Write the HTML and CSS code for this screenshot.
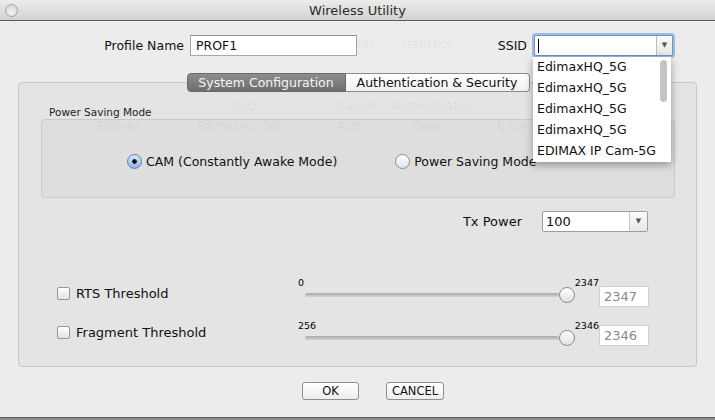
FILE: index.html
```html
<!DOCTYPE html>
<html lang="en">
<head>
    <meta charset="UTF-8">
    <meta name="viewport" content="width=device-width, initial-scale=1.0">
    <title>Wireless Utility</title>
    <link rel="stylesheet" href="styles.css">
</head>
<body>
    <div class="window">
        <div class="titlebar">
            <span class="close-btn"></span>
            <span class="title">Wireless Utility</span>
            <span></span>
        </div>

        <div class="profile-row">
            <label class="profile-label" for="profile">Profile Name</label>
            <input class="text-input profile-input" id="profile" type="text" value="PROF1">
            <label class="ssid-label" for="ssid">SSID</label>
            <div class="combo">
                <input class="combo-input" id="ssid" type="text" value="">
                <span class="combo-caret"></span>
                <span class="combo-arrow">&#9660;</span>
                <ul class="ssid-list">
                    <li>EdimaxHQ_5G</li>
                    <li>EdimaxHQ_5G</li>
                    <li>EdimaxHQ_5G</li>
                    <li>EdimaxHQ_5G</li>
                    <li>EDIMAX IP Cam-5G</li>
                    <span class="scroll-thumb"></span>
                </ul>
            </div>
        </div>

        <div class="panel">
            <div class="tabs">
                <button class="tab tab-active">System Configuration</button>
                <button class="tab tab-auth">Authentication &amp; Security</button>
            </div>

            <div class="group-title">Power Saving Mode</div>
            <div class="group-box">
                <label class="radio-item radio-cam">
                    <span class="radio radio-on"></span>CAM (Constantly Awake Mode)
                </label>
                <label class="radio-item radio-psm">
                    <span class="radio"></span>Power Saving Mode
                </label>
            </div>

            <div class="tx-row">
                <span class="tx-label">Tx Power</span>
                <div class="select">
                    <span class="select-value">100</span>
                    <span class="select-arrow">&#9660;</span>
                </div>
            </div>

            <div class="thresholds">
                <div class="threshold-row">
                    <label class="check-item"><span class="checkbox"></span>RTS Threshold</label>
                    <div class="slider">
                        <div class="slider-labels"><span>0</span><span>2347</span></div>
                        <div class="slider-track"><span class="slider-knob"></span></div>
                    </div>
                    <input class="num-input" type="text" value="2347">
                </div>
                <div class="threshold-row row-fragment">
                    <label class="check-item"><span class="checkbox"></span>Fragment Threshold</label>
                    <div class="slider">
                        <div class="slider-labels"><span>256</span><span>2346</span></div>
                        <div class="slider-track"><span class="slider-knob"></span></div>
                    </div>
                    <input class="num-input" type="text" value="2346">
                </div>
            </div>
        </div>

        <div class="buttons">
            <button class="push-btn btn-ok">OK</button>
            <button class="push-btn btn-cancel">CANCEL</button>
        </div>
    </div>

    <!-- the window behind shows faintly through this one -->
    <div class="ghost">
        <span style="left:355px;top:37px">Key</span>
        <span style="left:400px;top:37px">Statistics</span>
        <span style="left:230px;top:99px">SSID</span>
        <span style="left:330px;top:99px">Channel</span>
        <span style="left:391px;top:99px">Authentication</span>
        <span style="left:97px;top:119px">Edimax</span>
        <span style="left:197px;top:119px">EdimaxHQ_5G</span>
        <span style="left:337px;top:119px">Auto</span>
        <span style="left:413px;top:119px">Open</span>
        <span style="left:497px;top:119px">None</span>
    </div>
</body>
</html>
```

FILE: styles.css
```css
* {
    box-sizing: border-box;
}
body {
    position: relative;
    margin: 0;
    width: 715px;
    height: 420px;
    overflow: hidden;
    background-color: #8c8c8c;
    font-family: "DejaVu Sans", sans-serif;
    font-size: 12.5px;
    color: #111;
}
.window {
    height: 418px;
    background-color: #ececec;
    border-bottom: 1px solid #5e5e5e;
}

/* title bar */
.titlebar {
    height: 21px;
    display: grid;
    grid-template-columns: 1fr auto 1fr;
    align-items: center;
    background: linear-gradient(#ececec, #d2d2d2);
    border-bottom: 1px solid #5c5c5c;
}
.close-btn {
    width: 13px;
    height: 13px;
    margin-left: 5px;
    border-radius: 50%;
    border: 1px solid #a3a3a3;
    background: radial-gradient(circle at 50% 70%, #f4f4f4, #cfcfcf);
}
.title {
    font-size: 13px;
    color: #2c2c2c;
}

/* profile row */
.profile-row {
    display: flex;
    align-items: center;
    height: 21px;
    margin-top: 14px;
}
.profile-label {
    width: 184px;
    text-align: right;
}
.text-input {
    height: 21px;
    border: 1px solid #a8a8a8;
    border-top-color: #8f8f8f;
    background-color: #fff;
    font-family: inherit;
    font-size: 12.5px;
    padding: 0 5px;
    color: #111;
    outline: none;
}
.profile-input {
    width: 167px;
    margin-left: 6px;
}
.ssid-label {
    width: 170px;
    text-align: right;
}
.combo {
    position: relative;
    width: 139px;
    height: 21px;
    margin-left: 7px;
    display: flex;
    border: 1px solid #6f94c9;
    border-radius: 2px;
    box-shadow: 0 0 0 2px #9bbbe6;
    background-color: #fff;
}
.combo-input {
    flex: 1;
    min-width: 0;
    border: none;
    outline: none;
    background: transparent;
    padding: 0 0 0 4px;
}
.combo-caret {
    position: absolute;
    left: 3px;
    top: 3px;
    width: 1px;
    height: 14px;
    background-color: #000;
}
.combo-arrow {
    width: 16px;
    border-left: 1px solid #bcbcbc;
    background: linear-gradient(#fbfbfb, #e6e6e6);
    font-size: 7px;
    color: #555;
    text-align: center;
    line-height: 19px;
}
.ssid-list {
    position: absolute;
    top: 21px;
    left: -2px;
    width: 138px;
    height: 105px;
    margin: 0;
    padding: 0 13px 0 4px;
    list-style: none;
    background-color: #fff;
    box-shadow: 0 3px 8px rgba(0, 0, 0, 0.35);
    overflow: hidden;
    z-index: 3;
}
.ssid-list li {
    height: 21px;
    line-height: 20px;
    font-size: 12.5px;
    white-space: nowrap;
    overflow: hidden;
    color: #111;
}
.scroll-thumb {
    position: absolute;
    top: 3px;
    right: 4px;
    width: 7px;
    height: 42px;
    border-radius: 4px;
    background-color: #c4c4c4;
}

/* tab panel */
.panel {
    height: 285px;
    margin: 26px 18px 0;
    padding: 0 21px 0 22px;
    border: 1px solid #c6c6c6;
    border-radius: 4px;
    background-color: #e4e4e4;
}
.tabs {
    position: relative;
    z-index: 2;
    display: flex;
    justify-content: center;
    margin-top: -10px;
}
.tab {
    height: 19px;
    padding: 0;
    border: 1px solid #8a8a8a;
    font-family: inherit;
    font-size: 12.5px;
    line-height: 17px;
    color: #111;
    background: linear-gradient(#ffffff, #f1f1f1);
}
.tab-active {
    width: 159px;
    border-radius: 4px 0 0 4px;
    border-color: #6a6a6a;
    color: #f4f4f4;
    background: linear-gradient(#8d8d8d, #6e6e6e);
}
.tab-auth {
    width: 184px;
    border-left: none;
    border-radius: 0 4px 4px 0;
}
.group-title {
    margin-top: 14px;
    padding-left: 8px;
    font-size: 10.5px;
    line-height: 13px;
    color: #222;
}
.group-box {
    height: 79px;
    display: flex;
    align-items: center;
    padding: 5px 0 0 85px;
    border: 1px solid #c9c9c9;
    border-radius: 4px;
    background-color: #dedede;
}
.radio-item {
    display: flex;
    align-items: center;
    font-size: 12.5px;
}
.radio-psm {
    margin-left: 58px;
}
.radio {
    width: 15px;
    height: 15px;
    margin-right: 4px;
    border-radius: 50%;
    border: 1px solid #8e8e8e;
    background: linear-gradient(#ffffff, #e4e4e4);
}
.radio-on {
    border-color: #5a7fb3;
    background: radial-gradient(circle, #111 0, #111 2px, transparent 2.5px),
        linear-gradient(#d8e7f8, #8fb5e6);
}

/* tx power */
.tx-row {
    display: flex;
    align-items: center;
    justify-content: flex-end;
    margin-top: 13px;
    padding-right: 27px;
    height: 21px;
}
.tx-label {
    font-size: 13px;
    margin-right: 20px;
}
.select {
    width: 106px;
    height: 21px;
    display: flex;
    border: 1px solid #9d9d9d;
    border-radius: 2px;
    background-color: #fff;
}
.select-value {
    flex: 1;
    padding-left: 3px;
    font-size: 13px;
    line-height: 19px;
}
.select-arrow {
    width: 18px;
    border-left: 1px solid #c4c4c4;
    background: linear-gradient(#fbfbfb, #e8e8e8);
    font-size: 7px;
    color: #555;
    text-align: center;
    line-height: 19px;
}

/* thresholds */
.thresholds {
    margin-top: 45px;
    display: flex;
    flex-direction: column;
    gap: 13px;
}
.threshold-row {
    display: grid;
    grid-template-columns: 257px 301px 50px;
    align-items: start;
}
.check-item {
    display: flex;
    align-items: center;
    padding-left: 16px;
    margin-top: 8px;
    font-size: 13px;
    line-height: 17px;
}
.row-fragment .check-item {
    margin-top: 4px;
}
.row-fragment .num-input {
    margin-top: 5px;
}
.checkbox {
    width: 13px;
    height: 13px;
    margin-right: 6px;
    border: 1px solid #979797;
    border-radius: 2px;
    background: linear-gradient(#ffffff, #e2e2e2);
}
.slider-labels {
    display: flex;
    justify-content: space-between;
    height: 12px;
    font-size: 9.5px;
    line-height: 12px;
    color: #000;
}
.slider-track {
    position: relative;
    height: 16px;
    margin: -2px 32px 0 7px;
    display: flex;
    align-items: center;
    justify-content: flex-end;
}
.slider-track::before {
    content: "";
    flex: 1;
    height: 4px;
    border-radius: 2px;
    background: linear-gradient(#a8a8a8, #d4d4d4);
}
.slider-knob {
    width: 16px;
    height: 16px;
    margin-right: -8px;
    border-radius: 50%;
    border: 1px solid #8a8a8a;
    background: linear-gradient(#ffffff, #e1e1e1);
}
.num-input {
    width: 50px;
    height: 21px;
    margin-top: 9px;
    border: 1px solid #d0d0d0;
    background-color: #fff;
    padding: 0 4px;
    font-family: inherit;
    font-size: 13px;
    color: #888;
    outline: none;
}

/* bottom buttons */
.buttons {
    display: flex;
    justify-content: center;
    gap: 27px;
    margin-top: 15px;
    padding-left: 31px;
}
.push-btn {
    height: 18px;
    padding: 0;
    border: 1px solid #8f8f8f;
    border-radius: 3px;
    background: linear-gradient(#ffffff, #ededed);
    font-family: inherit;
    font-size: 11.5px;
    color: #111;
}
.btn-ok {
    width: 57px;
}
.btn-cancel {
    width: 58px;
}

/* see-through text from the window behind */
.ghost {
    position: absolute;
    top: 0;
    left: 0;
    width: 715px;
    height: 420px;
    pointer-events: none;
    z-index: 1;
    font-size: 11.5px;
    color: rgba(0, 0, 0, 0.06);
}
.ghost span {
    position: absolute;
}
```
